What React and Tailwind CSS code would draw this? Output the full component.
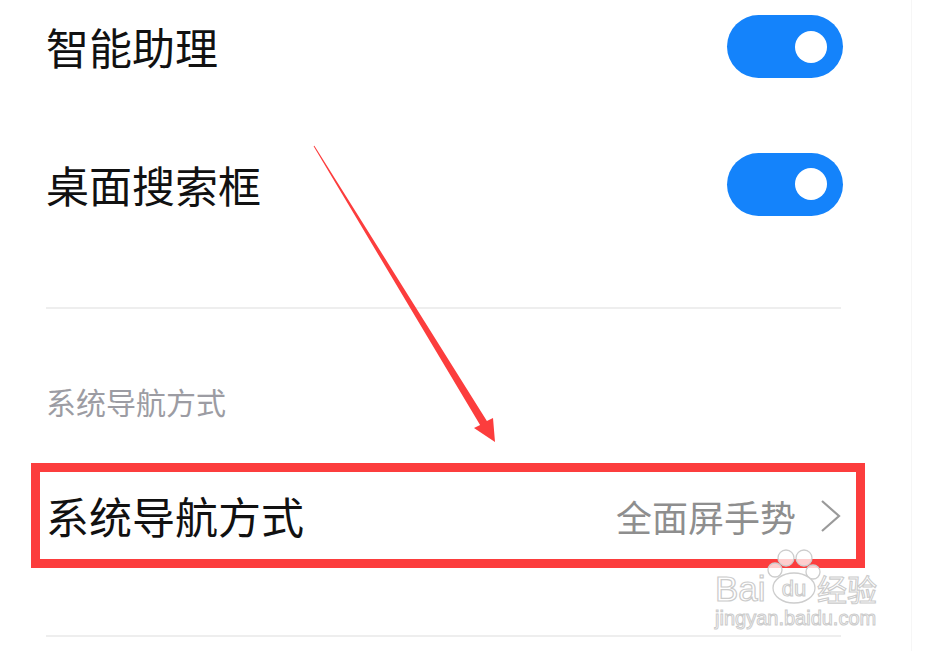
import React from "react";

const CJK = { fontFamily: '"Noto Sans CJK SC", "Noto Sans", sans-serif' };

function Toggle() {
  return (
    <div className="flex h-[63px] w-[116px] items-center justify-end rounded-full bg-[#1483fb] pr-[16px]">
      <div className="h-[32px] w-[32px] rounded-full bg-white" />
    </div>
  );
}

function Arrow() {
  return (
    <svg
      className="pointer-events-none absolute left-0 top-0"
      width="928"
      height="651"
      viewBox="0 0 928 651"
    >
      <polygon
        fill="#fc3d3d"
        points="313.6,146.3 480.1,425.1 474,428 495,442 493,418 486.9,420.9 314.4,145.7"
      />
    </svg>
  );
}

function Watermark() {
  const st = { stroke: "#cdcdcd", strokeWidth: 1.3, fill: "rgba(255,255,255,0.75)" };
  return (
    <svg
      className="pointer-events-none absolute left-[710px] top-[545px]"
      width="175"
      height="90"
      viewBox="0 0 175 90"
    >
      <circle cx="76" cy="13" r="8" {...st} />
      <circle cx="94" cy="13" r="8" {...st} />
      <circle cx="65" cy="25" r="7" {...st} />
      <circle cx="103" cy="27" r="7" {...st} />
      <ellipse cx="84" cy="43" rx="21" ry="15" {...st} />
      <text
        x="5"
        y="56"
        fontSize="35"
        fontFamily='"Liberation Sans", Arial, sans-serif'
        fill="#ffffff"
        stroke="#cbcbcb"
        strokeWidth="1.2"
      >
        Bai
      </text>
      <text
        x="84"
        y="51"
        textAnchor="middle"
        fontSize="22"
        fontFamily='"Liberation Sans", Arial, sans-serif'
        fill="#ffffff"
        stroke="#cbcbcb"
        strokeWidth="1.1"
      >
        du
      </text>
      <text
        x="107"
        y="56"
        fontSize="30"
        fontFamily='"Noto Sans CJK SC", sans-serif'
        fill="#ffffff"
        stroke="#cbcbcb"
        strokeWidth="1.1"
      >
        经验
      </text>
      <text
        x="5"
        y="80"
        fontSize="20"
        fontFamily='"Liberation Sans", Arial, sans-serif'
        fill="#ffffff"
        stroke="#cbcbcb"
        strokeWidth="1"
      >
        jingyan.baidu.com
      </text>
    </svg>
  );
}

export default function App() {
  return (
    <div
      className="relative flex h-[651px] w-[928px] overflow-hidden bg-white"
      style={CJK}
    >
      <div className="w-[911px] shrink-0">
        <div className="ml-[46px] flex w-[797px] flex-col">
          <div className="flex h-[93px] items-center justify-between">
            <span className="text-[43px] leading-none text-[#111111]">智能助理</span>
            <Toggle />
          </div>
          <div className="mt-[44px] flex h-[94px] items-center justify-between">
            <span className="text-[43px] leading-none text-[#111111]">桌面搜索框</span>
            <Toggle />
          </div>
          <div className="mt-[76px] h-[2px] w-[795px] bg-[#eeeeee]" />
          <div className="mt-[77px] text-[30px] leading-none text-[#9c9ca3]">系统导航方式</div>
          <div className="-ml-[15px] mt-[47px] flex h-[105px] w-[834px] items-center justify-between border-[9px] border-[#fc3d3d] pl-[6px] pr-[14px]">
            <span className="text-[43px] leading-none text-[#111111]">系统导航方式</span>
            <div className="flex items-center gap-[24px]">
              <span className="text-[36px] leading-none text-[#8e8e8e]">全面屏手势</span>
              <svg width="22" height="34" viewBox="0 0 22 34">
                <polyline
                  points="2,2 19,17 2,32"
                  fill="none"
                  stroke="#9a9a9a"
                  strokeWidth="2.2"
                  strokeLinejoin="miter"
                />
              </svg>
            </div>
          </div>
          <div className="mt-[67px] h-[2px] w-[795px] bg-[#eeeeee]" />
        </div>
      </div>
      <div className="h-full w-px bg-[#f6f6f6]" />
      <div className="flex-1" />
      <Arrow />
      <Watermark />
    </div>
  );
}
